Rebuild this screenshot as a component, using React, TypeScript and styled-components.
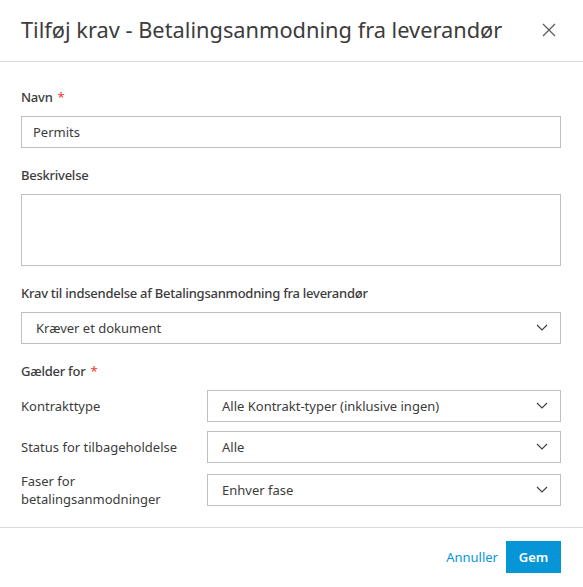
import React, { useState } from "react";
import styled, { createGlobalStyle } from "styled-components";

const GlobalStyle = createGlobalStyle`
  html, body {
    margin: 0;
    padding: 0;
    background: #ffffff;
  }
  body {
    font-family: "Noto Sans", "Open Sans", sans-serif;
    color: #3c3c3c;
  }
  * {
    box-sizing: border-box;
  }
`;

const Dialog = styled.div`
  width: 583px;
  height: 587px;
  display: flex;
  flex-direction: column;
  background: #fff;
`;

const Header = styled.div`
  height: 63px;
  display: flex;
  align-items: center;
  justify-content: space-between;
  padding: 0 27px 1px 21px;
  border-bottom: 1px solid #d9d9d9;
`;

const Title = styled.h1`
  margin: 0;
  font-size: 21.8px;
  font-weight: 400;
  color: #3c3c3c;
`;

const CloseButton = styled.button`
  width: 14px;
  height: 14px;
  padding: 0;
  border: none;
  background: none;
  display: flex;
  align-items: center;
  justify-content: center;
  cursor: pointer;
`;

const Body = styled.div`
  flex: 1;
  padding: 27px 22px 0 21px;
  display: flex;
  flex-direction: column;
`;

const Field = styled.div`
  display: flex;
  flex-direction: column;
  margin-bottom: 19px;
`;

const Label = styled.label`
  font-size: 13px;
  font-weight: 500;
  line-height: 16px;
  letter-spacing: -0.25px;
  margin-bottom: 11px;
  color: #3c3c3c;
`;

const Required = styled.span`
  color: #ec4a41;
  margin-left: 5px;
`;

const TextInput = styled.input`
  height: 32px;
  width: 100%;
  border: 1px solid #bfbfbf;
  padding: 0 11px;
  font-family: inherit;
  font-size: 13px;
  color: #3c3c3c;
  outline: none;
`;

const TextArea = styled.textarea`
  height: 72px;
  width: 100%;
  border: 1px solid #bfbfbf;
  padding: 8px 11px;
  font-family: inherit;
  font-size: 13px;
  resize: none;
  outline: none;
  display: block;
`;

const SelectBox = styled.div`
  flex: 1 0 auto;
  height: 32px;
  border: 1px solid #bfbfbf;
  display: flex;
  align-items: center;
  justify-content: space-between;
  padding: 0 12px 0 14px;
  font-size: 13px;
  color: #3c3c3c;
  cursor: pointer;
`;

const RowList = styled.div`
  display: flex;
  flex-direction: column;
  gap: 9px;
`;

const Row = styled.div`
  display: flex;
  align-items: center;
`;

const RowLabel = styled.div`
  width: 186px;
  flex: none;
  font-size: 13px;
  line-height: 18px;
  color: #3c3c3c;
`;

const Footer = styled.div`
  height: 61px;
  border-top: 1px solid #d9d9d9;
  display: flex;
  align-items: center;
  justify-content: flex-end;
  gap: 8px;
  padding: 0 22px 0 21px;
`;

const LinkButton = styled.button`
  border: none;
  background: none;
  padding: 0;
  font-family: inherit;
  font-size: 13px;
  color: #0696d7;
  cursor: pointer;
`;

const PrimaryButton = styled.button`
  width: 55px;
  height: 32px;
  border: none;
  background: #0696d7;
  color: #fff;
  font-family: inherit;
  font-size: 13px;
  font-weight: 600;
  cursor: pointer;
`;

const Chevron = () => (
  <svg width="12" height="7" viewBox="0 0 12 7" fill="none">
    <path d="M1 1l5 5 5-5" stroke="#3c3c3c" strokeWidth="1.1" />
  </svg>
);

const Select = ({ value }: { value: string }) => (
  <SelectBox>
    <span>{value}</span>
    <Chevron />
  </SelectBox>
);

export default function App() {
  const [name, setName] = useState("Permits");

  return (
    <>
      <GlobalStyle />
      <Dialog>
        <Header>
          <Title>Tilføj krav - Betalingsanmodning fra leverandør</Title>
          <CloseButton aria-label="Luk">
            <svg width="14" height="14" viewBox="0 0 14 14">
              <path d="M1 1l12 12M13 1L1 13" stroke="#5a5a5a" strokeWidth="1.2" />
            </svg>
          </CloseButton>
        </Header>
        <Body>
          <Field>
            <Label>
              Navn<Required>*</Required>
            </Label>
            <TextInput value={name} onChange={e => setName(e.target.value)} />
          </Field>
          <Field>
            <Label>Beskrivelse</Label>
            <TextArea />
          </Field>
          <Field>
            <Label>Krav til indsendelse af Betalingsanmodning fra leverandør</Label>
            <Select value="Kræver et dokument" />
          </Field>
          <Field>
            <Label>
              Gælder for<Required>*</Required>
            </Label>
            <RowList>
              <Row>
                <RowLabel>Kontrakttype</RowLabel>
                <Select value="Alle Kontrakt-typer (inklusive ingen)" />
              </Row>
              <Row>
                <RowLabel>Status for tilbageholdelse</RowLabel>
                <Select value="Alle" />
              </Row>
              <Row>
                <RowLabel>
                  Faser for
                  <br />
                  betalingsanmodninger
                </RowLabel>
                <Select value="Enhver fase" />
              </Row>
            </RowList>
          </Field>
        </Body>
        <Footer>
          <LinkButton>Annuller</LinkButton>
          <PrimaryButton>Gem</PrimaryButton>
        </Footer>
      </Dialog>
    </>
  );
}
